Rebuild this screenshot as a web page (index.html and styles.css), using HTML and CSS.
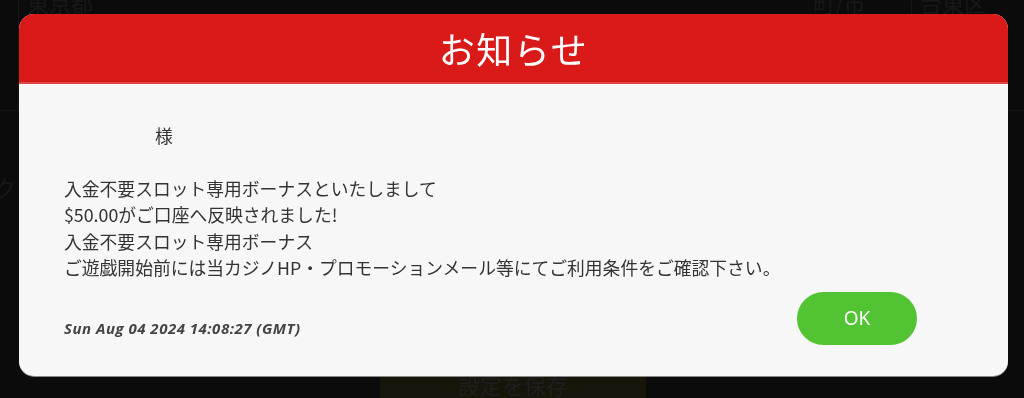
FILE: index.html
```html
<!DOCTYPE html>
<html lang="ja">
<head>
    <meta charset="UTF-8">
    <meta name="viewport" content="width=device-width, initial-scale=1.0">
    <title>お知らせ</title>
    <link rel="stylesheet" href="styles.css">
</head>
<body>

    <div class="page">
        <div class="address-row">
            <div class="field pref">東京都</div>
            <div class="field city-label">町/市</div>
            <div class="field city">台東区</div>
        </div>
        <div class="section-title">ク</div>
        <div class="save-row">
            <button class="save-btn">設定を保存</button>
        </div>
    </div>

    <div class="overlay"></div>

    <div class="notice">
        <div class="notice-header">お知らせ</div>
        <div class="notice-body">
            <p class="greeting"><span class="user-name"></span>様</p>
            <p class="message">
                入金不要スロット専用ボーナスといたしまして<br>
                $50.00がご口座へ反映されました!<br>
                入金不要スロット専用ボーナス<br>
                ご遊戯開始前には当カジノHP・プロモーションメール等にてご利用条件をご確認下さい。
            </p>
            <div class="notice-footer">
                <span class="notice-date">Sun Aug 04 2024 14:08:27 (GMT)</span>
                <button class="ok-btn">OK</button>
            </div>
        </div>
    </div>

</body>
</html>
```

FILE: styles.css
```css
body {
    margin: 0;
    background-color: #0b0b0b;
    font-family: "Noto Sans CJK JP", "Noto Sans", sans-serif;
    height: 398px;
    overflow: hidden;
}
.page {
    color: #181818;
}
.address-row {
    display: flex;
    height: 122px;
    margin-top: -12px;
    border-bottom: 1px solid #151515;
    padding-left: 18px;
}
.field {
    font-size: 22px;
    line-height: 28px;
    padding: 0 8px;
}
.pref {
    border-left: 1px solid #161616;
    flex: 1;
}
.city-label {
    width: 90px;
}
.city {
    width: 96px;
    border-left: 1px solid #161616;
}
.section-title {
    font-size: 22px;
    margin-top: 60px;
    margin-left: -6px;
}
.save-row {
    display: flex;
    justify-content: center;
    margin-top: 156px;
}
.save-btn {
    width: 266px;
    height: 50px;
    margin-left: 2px;
    border: none;
    background-color: #17140a;
    color: #1e1e1e;
    font-family: inherit;
    font-size: 22px;
}
.overlay {
    position: fixed;
    inset: 0;
}
.notice {
    position: fixed;
    top: 14px;
    left: 19px;
    right: 16px;
    height: 362px;
    display: flex;
    flex-direction: column;
    border-radius: 15px;
    overflow: hidden;
    background-color: #f7f7f7;
    box-shadow: 0 1px 0 #8a8a8a;
}
.notice-header {
    height: 68px;
    background-color: #d91a18;
    border-bottom: 2px solid #e04848;
    color: #ffffff;
    font-size: 36px;
    line-height: 68px;
    text-align: center;
    letter-spacing: 1.5px;
}
.notice-body {
    flex: 1;
    padding: 38px 45px 0 45px;
    color: #333333;
    font-size: 17.8px;
    line-height: 26.5px;
}
.greeting,
.message {
    margin: 0;
}
.user-name {
    display: inline-block;
    width: 91px;
}
.message {
    margin-top: 26px;
}
.notice-footer {
    display: flex;
    justify-content: space-between;
    align-items: flex-end;
    margin-top: 11px;
}
.notice-date {
    font-family: "Open Sans", sans-serif;
    font-size: 15px;
    font-weight: 700;
    font-style: italic;
    color: #444444;
    letter-spacing: 0.5px;
    line-height: 18px;
    padding-bottom: 8px;
}
.ok-btn {
    width: 120px;
    height: 53px;
    margin-right: 46px;
    border: none;
    border-radius: 27px;
    background-color: #52c434;
    color: #ffffff;
    font-family: "Noto Sans", sans-serif;
    font-size: 19px;
    cursor: pointer;
}
```
